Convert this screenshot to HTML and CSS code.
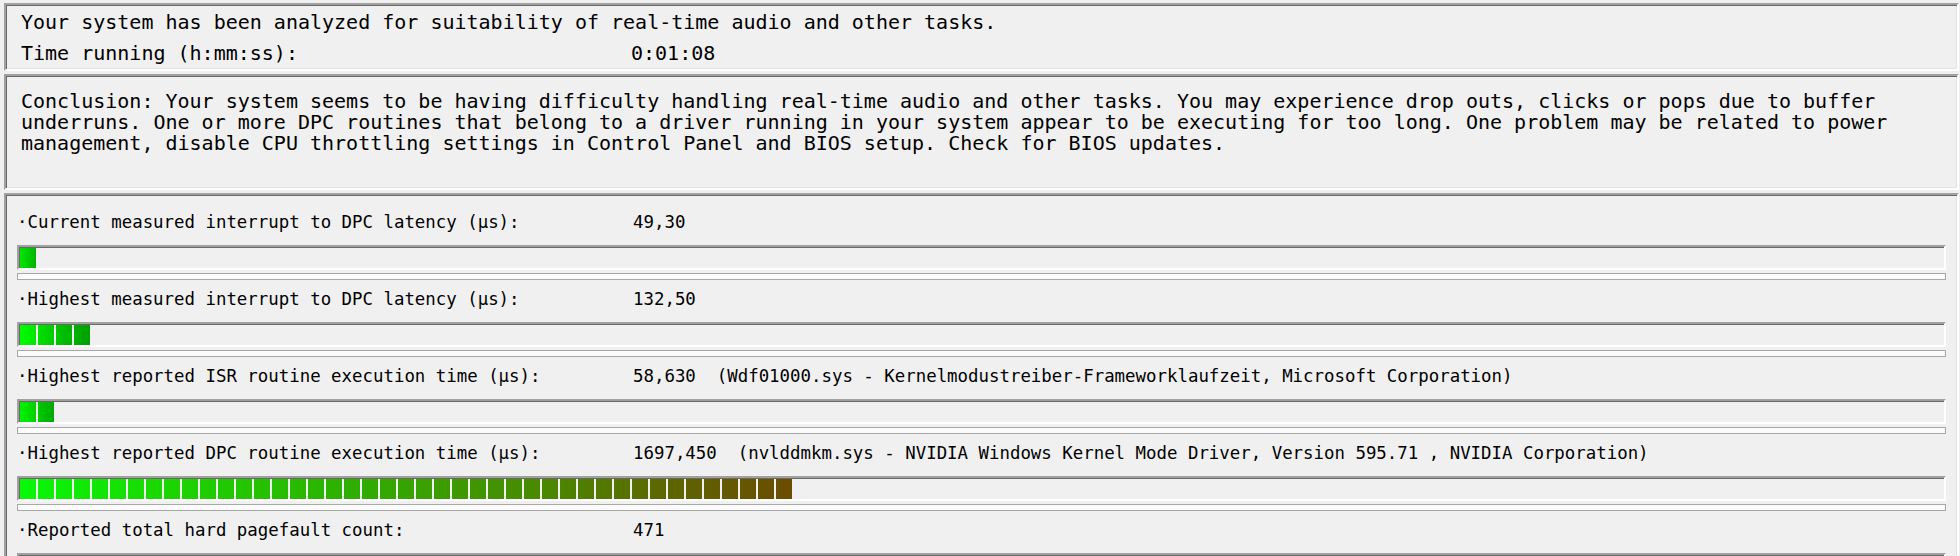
FILE: index.html
```html
<!DOCTYPE html>
<html lang="en">
<head>
<meta charset="utf-8">
<title>LatencyMon</title>
<link rel="stylesheet" href="styles.css">
</head>
<body>
<div class="window">
  <section class="panel status">
    <div class="line">Your system has been analyzed for suitability of real-time audio and other tasks.</div>
    <div class="line kv"><span class="key">Time running (h:mm:ss):</span><span class="val">0:01:08</span></div>
  </section>

  <section class="panel conclusion">
    <p class="text">Conclusion: Your system seems to be having difficulty handling real-time audio and other tasks. You may experience drop outs, clicks or pops due to buffer<br>underruns. One or more DPC routines that belong to a driver running in your system appear to be executing for too long. One problem may be related to power<br>management, disable CPU throttling settings in Control Panel and BIOS setup. Check for BIOS updates.</p>
  </section>

  <section class="panel metrics">
    <div class="row">
      <div class="label"><span class="key">·Current measured interrupt to DPC latency (µs):</span><span class="val">49,30</span></div>
      <div class="bar"><div class="fill fill-cur" style="width:16px"></div></div>
      <div class="sep"></div>
    </div>
    <div class="row">
      <div class="label"><span class="key">·Highest measured interrupt to DPC latency (µs):</span><span class="val">132,50</span></div>
      <div class="bar"><div class="fill fill-high" style="width:70px"></div></div>
      <div class="sep"></div>
    </div>
    <div class="row">
      <div class="label"><span class="key">·Highest reported ISR routine execution time (µs):</span><span class="val">58,630  (Wdf01000.sys - Kernelmodustreiber-Frameworklaufzeit, Microsoft Corporation)</span></div>
      <div class="bar"><div class="fill fill-isr" style="width:34px"></div></div>
      <div class="sep"></div>
    </div>
    <div class="row">
      <div class="label"><span class="key">·Highest reported DPC routine execution time (µs):</span><span class="val">1697,450  (nvlddmkm.sys - NVIDIA Windows Kernel Mode Driver, Version 595.71 , NVIDIA Corporation)</span></div>
      <div class="bar"><div class="fill fill-dpc" style="width:772px"></div></div>
      <div class="sep"></div>
    </div>
    <div class="row">
      <div class="label"><span class="key">·Reported total hard pagefault count:</span><span class="val">471</span></div>
      <div class="bar"><div class="fill fill-pf" style="width:0px"></div></div>
      <div class="sep"></div>
    </div>
  </section>
</div>
</body>
</html>
```

FILE: styles.css
```css
html, body {
  margin: 0;
  padding: 0;
  background: #f0f0f0;
}

body {
  width: 1960px;
  height: 556px;
  overflow: hidden;
  font-family: "DejaVu Sans Mono", "Liberation Mono", monospace;
  color: #000;
}

.window {
  display: flex;
  flex-direction: column;
  gap: 3px;
  padding: 3px 1px 0 4px;
}

.panel {
  background: #f0f0f0;
  border-style: solid;
  border-width: 2px;
  border-color: #a0a0a0 #ffffff #ffffff #a0a0a0;
  box-shadow: inset 1px 1px 0 #696969, inset -1px -1px 0 #e3e3e3;
}

/* status panel */
.status {
  padding: 2px 15px 0 15px;
  height: 62px;
  font-size: 20px;
}

.line {
  line-height: 31px;
  white-space: pre;
}

.kv {
  display: flex;
}

.status .key {
  width: 610px;
  flex: none;
}

/* conclusion panel */
.conclusion {
  padding: 15px 15px 0 15px;
  height: 97px;
  font-size: 20px;
}

.conclusion .text {
  margin: 0;
  line-height: 21px;
  white-space: nowrap;
}

/* metrics panel */
.metrics {
  padding: 8px 11px 0 11px;
  height: 400px;
  font-size: 17.4px;
}

.row {
  display: flex;
  flex-direction: column;
}

.label {
  display: flex;
  line-height: 39px;
  height: 39px;
  padding-bottom: 3px;
  white-space: pre;
}

.label .key {
  width: 616px;
  flex: none;
}

.bar {
  height: 20px;
  border-style: solid;
  border-width: 2px;
  border-color: #a0a0a0 #ffffff #ffffff #a0a0a0;
  box-shadow: inset 1px 1px 0 #696969;
  padding: 1px 0 0 1px;
  background: #f0f0f0;
  margin-bottom: 3px;
}

.fill {
  height: 20px;
}

.fill-cur {
  background:
    repeating-linear-gradient(90deg, transparent 0 16px, #f0f0f0 16px 18px),
    linear-gradient(90deg, #00e800, #00b400);
}

.fill-high {
  background:
    repeating-linear-gradient(90deg, transparent 0 16px, #f0f0f0 16px 18px),
    linear-gradient(90deg, #00ff00, #00c800 50%, #009e00);
}

.fill-isr {
  background:
    repeating-linear-gradient(90deg, transparent 0 16px, #f0f0f0 16px 18px),
    linear-gradient(90deg, #00f400, #00a800);
}

.fill-dpc {
  background:
    repeating-linear-gradient(90deg, transparent 0 16px, #f0f0f0 16px 18px),
    linear-gradient(90deg, #08f808 0%, #1cd400 20%, #2eb000 42%, #4a8800 68%, #5e6400 85%, #6b4c00 100%);
}

.fill-pf {
  background: transparent;
}

.sep {
  height: 5px;
  border: 1px solid #a8a8a8;
  background: #fbfbfb;
}
```
